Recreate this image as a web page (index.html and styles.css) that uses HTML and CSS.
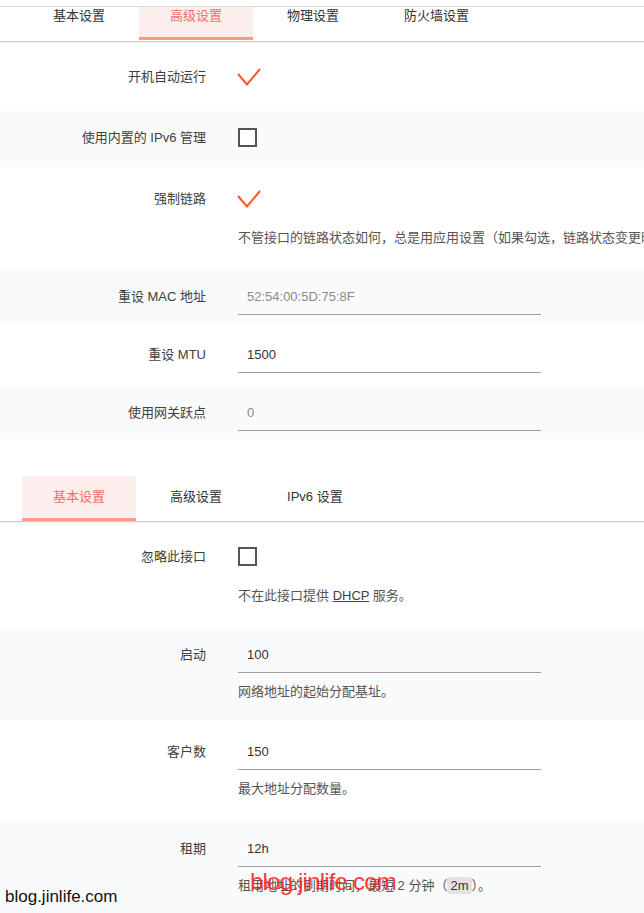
FILE: index.html
```html
<!DOCTYPE html>
<html lang="zh-CN">
<head>
<meta charset="utf-8">
<title>接口设置</title>
<link rel="stylesheet" href="styles.css">
</head>
<body>
<div class="topline"></div>

<section class="section">
  <div class="tabbar tabbar-clipped">
    <ul class="tabs tabs-shifted">
      <li class="tab">基本设置</li>
      <li class="tab active">高级设置</li>
      <li class="tab">物理设置</li>
      <li class="tab">防火墙设置</li>
    </ul>
  </div>
  <div class="rows">
    <div class="row">
      <label class="label">开机自动运行</label>
      <div class="field">
        <div class="ctl"><span class="checked"><svg width="24" height="18" viewBox="0 0 24 18"><path d="M1 6 L10 16.5 L23 1" fill="none" stroke="#ff5722" stroke-width="2"/></svg></span></div>
      </div>
    </div>
    <div class="row alt">
      <label class="label">使用内置的 IPv6 管理</label>
      <div class="field">
        <div class="ctl"><span class="checkbox"></span></div>
      </div>
    </div>
    <div class="row">
      <label class="label">强制链路</label>
      <div class="field">
        <div class="ctl"><span class="checked"><svg width="24" height="18" viewBox="0 0 24 18"><path d="M1 6 L10 16.5 L23 1" fill="none" stroke="#ff5722" stroke-width="2"/></svg></span></div>
        <div class="desc">不管接口的链路状态如何，总是用应用设置（如果勾选，链路状态变更时不再调用热插拔处理程序）</div>
      </div>
    </div>
    <div class="row alt">
      <label class="label">重设 MAC 地址</label>
      <div class="field">
        <input class="input" type="text" placeholder="52:54:00:5D:75:8F">
      </div>
    </div>
    <div class="row">
      <label class="label">重设 MTU</label>
      <div class="field">
        <input class="input" type="text" value="1500">
      </div>
    </div>
    <div class="row alt">
      <label class="label">使用网关跃点</label>
      <div class="field">
        <input class="input" type="text" placeholder="0">
      </div>
    </div>
  </div>
</section>

<section class="section section-second">
  <div class="tabbar">
    <ul class="tabs">
      <li class="tab active">基本设置</li>
      <li class="tab">高级设置</li>
      <li class="tab">IPv6 设置</li>
    </ul>
  </div>
  <div class="rows rows-second">
    <div class="row">
      <label class="label">忽略此接口</label>
      <div class="field">
        <div class="ctl"><span class="checkbox"></span></div>
        <div class="desc">不在此接口提供 <abbr class="abbr">DHCP</abbr> 服务。</div>
      </div>
    </div>
    <div class="row alt">
      <label class="label">启动</label>
      <div class="field">
        <input class="input" type="text" value="100">
        <div class="desc desc-input">网络地址的起始分配基址。</div>
      </div>
    </div>
    <div class="row">
      <label class="label">客户数</label>
      <div class="field">
        <input class="input" type="text" value="150">
        <div class="desc desc-input">最大地址分配数量。</div>
      </div>
    </div>
    <div class="row alt">
      <label class="label">租期</label>
      <div class="field">
        <input class="input" type="text" value="12h">
        <div class="desc desc-input">租用地址的到期时间，最短 2 分钟（<code class="code">2m</code>）。</div>
      </div>
    </div>
  </div>
</section>

<div class="wm-red">blog.jinlife.com</div>
<div class="wm-black">blog.jinlife.com</div>
</body>
</html>
```

FILE: styles.css
```css
html, body {
  margin: 0;
  padding: 0;
  overflow: hidden;
  background: #ffffff;
}

body {
  padding-top: 6px;
  font-family: "Liberation Sans", "Noto Sans CJK SC", sans-serif;
  font-size: 13px;
  color: #404040;
}

.topline {
  height: 1px;
  background: #dddddd;
}

.tabbar {
  border-bottom: 1px solid #cfcfcf;
  box-shadow: 0 1px 2px rgba(0, 0, 0, 0.08);
}

.tabbar-clipped {
  height: 34px;
  overflow: hidden;
}

.tabs {
  display: flex;
  gap: 3px;
  margin: 0;
  padding: 0 0 0 22px;
  list-style: none;
}

.tabs-shifted {
  margin-top: -12px;
}

.tab {
  padding: 11px 31px 11px;
  line-height: 20px;
  color: #333333;
  border-bottom: 3px solid transparent;
  white-space: nowrap;
}

.tab.active {
  background: #fdeeee;
  color: #f26d6d;
  border-bottom-color: #ff9a85;
}

.rows {
  display: flex;
  flex-direction: column;
  gap: 5px;
  padding-top: 8px;
}

.rows-second {
  padding-top: 8px;
}

.section-second {
  margin-top: 37px;
}

.row {
  display: grid;
  grid-template-columns: 206px 1fr;
  column-gap: 32px;
  padding: 8px 0;
}

.row.alt {
  background: #f9fafb;
}

.label {
  height: 36px;
  line-height: 37px;
  text-align: right;
  white-space: nowrap;
  color: #404040;
}

.field {
  display: flex;
  flex-direction: column;
  min-width: 0;
}

.ctl {
  height: 40px;
  display: flex;
  align-items: flex-start;
}

.checkbox {
  box-sizing: border-box;
  width: 19px;
  height: 19px;
  margin-top: 9px;
  border: 2px solid #555555;
  background: #ffffff;
}

.checked {
  display: block;
  margin-top: 10px;
  margin-left: -1px;
  height: 18px;
}

.checked svg {
  display: block;
}

.input {
  box-sizing: border-box;
  width: 303px;
  height: 37px;
  margin: 0;
  padding: 0 9px;
  border: 0;
  border-bottom: 1px solid #9e9e9e;
  background: transparent;
  font-family: "Liberation Sans", "Noto Sans CJK SC", sans-serif;
  font-size: 13px;
  color: #333333;
  outline: none;
}

.input::placeholder {
  color: #8a8a8a;
}

.desc {
  margin-top: 8px;
  margin-bottom: 9px;
  line-height: 20px;
  color: #555555;
  white-space: nowrap;
}

.desc-input {
  margin-top: 9px;
  margin-bottom: 10px;
}

.abbr {
  text-decoration: underline;
  color: #404040;
}

.code {
  font-family: "Liberation Sans", "Noto Sans CJK SC", sans-serif;
  font-size: 13px;
  background: #e3e3e3;
  border-radius: 3px;
  padding: 1px 3px;
  color: #333333;
}

.wm-red {
  position: absolute;
  left: 250px;
  top: 870px;
  font-family: "Liberation Sans", sans-serif;
  font-size: 24px;
  line-height: 24px;
  letter-spacing: -0.8px;
  color: rgba(255, 30, 30, 0.9);
  white-space: nowrap;
}

.wm-black {
  position: absolute;
  left: 5px;
  top: 888px;
  font-family: "Liberation Sans", sans-serif;
  font-size: 17px;
  line-height: 17px;
  color: #111111;
  white-space: nowrap;
}
```
